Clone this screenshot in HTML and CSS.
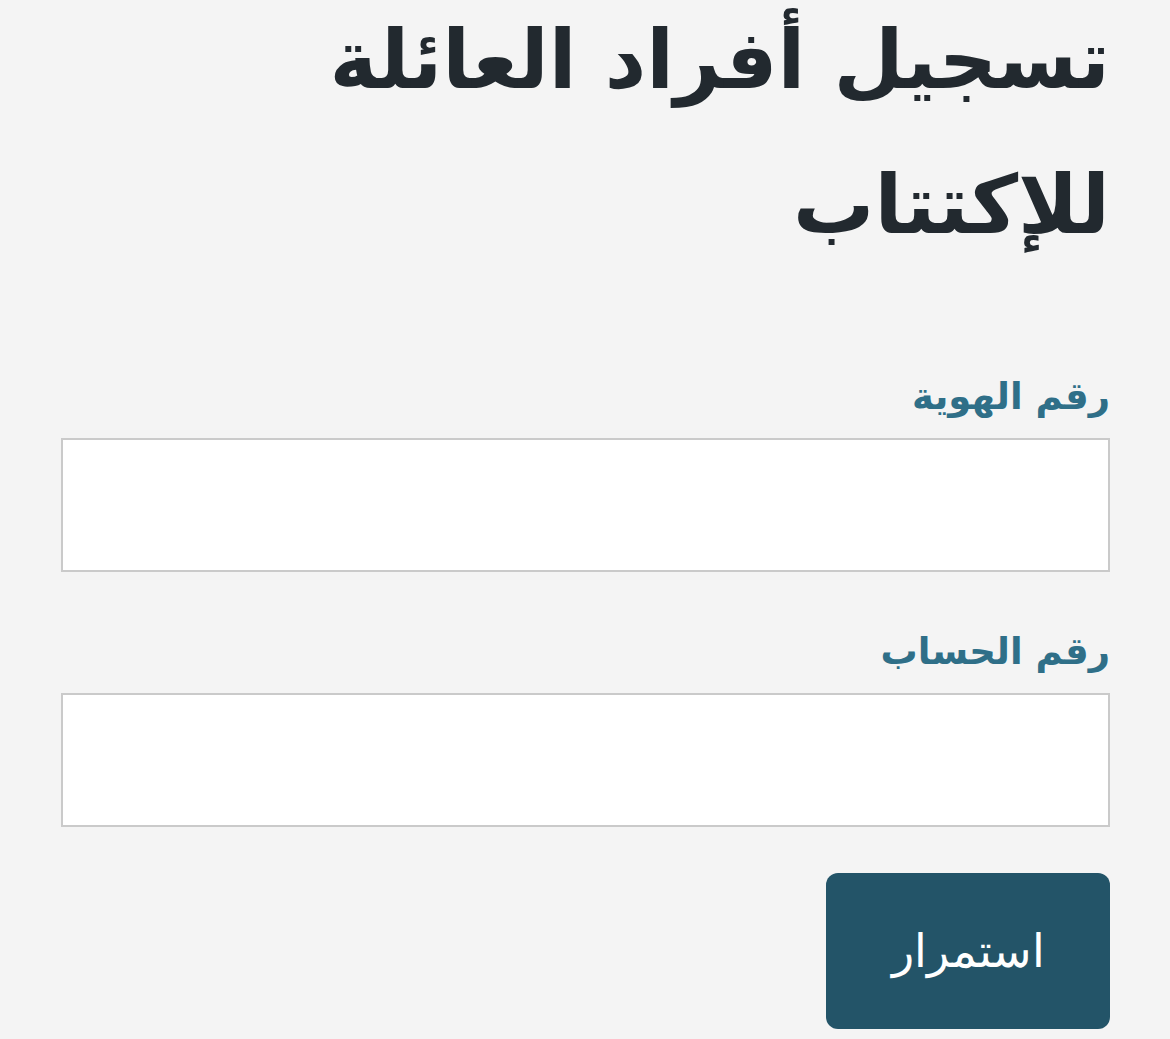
FILE: index.html
```html
<!DOCTYPE html>
<html lang="ar" dir="rtl">
<head>
  <meta charset="UTF-8">
  <meta name="viewport" content="width=device-width, initial-scale=1.0">
  <title>تسجيل أفراد العائلة للإكتتاب</title>
  <link rel="stylesheet" href="styles.css">
</head>
<body>
  <div class="page">
    <h1 class="page-title">تسجيل أفراد العائلة للإكتتاب</h1>

    <form class="signup-form">
      <div class="field">
        <label for="id-number" class="field-label">رقم الهوية</label>
        <input type="text" id="id-number" class="field-input">
      </div>
      <div class="field">
        <label for="account-number" class="field-label">رقم الحساب</label>
        <input type="text" id="account-number" class="field-input">
      </div>
      <div class="actions">
        <button type="submit" class="button">استمرار</button>
      </div>
    </form>
  </div>
</body>
</html>
```

FILE: styles.css
```css
:root {
  --page-bg: #f4f4f4;
  --title-color: #22292f;
  --label-color: #2f6f88;
  --primary: #235468;
  --border: #cacaca;
}

* {
  box-sizing: border-box;
  margin: 0;
  padding: 0;
}

body {
  font-family: "DejaVu Sans", "Noto Sans", sans-serif;
  background-color: var(--page-bg);
  color: var(--title-color);
}

.page {
  padding: 0 60px 0 61px;
}

.page-title {
  font-size: 81px;
  font-weight: bold;
  line-height: 145px;
  margin-top: -12px;
  margin-bottom: 78px;
}

.field {
  margin-bottom: 39px;
}

.field-label {
  display: block;
  color: var(--label-color);
  font-size: 37px;
  font-weight: bold;
  line-height: 82px;
}

.field-input {
  display: block;
  width: 100%;
  height: 134px;
  background: #fff;
  border: 2px solid var(--border);
  font-family: inherit;
  font-size: 30px;
  padding: 0 20px;
}

.actions {
  display: flex;
  padding-top: 7px;
}

.button {
  width: 284px;
  height: 156px;
  background-color: var(--primary);
  color: #fff;
  border: none;
  border-radius: 12px;
  font-family: inherit;
  font-size: 46px;
  font-weight: 300;
  cursor: pointer;
}
```
